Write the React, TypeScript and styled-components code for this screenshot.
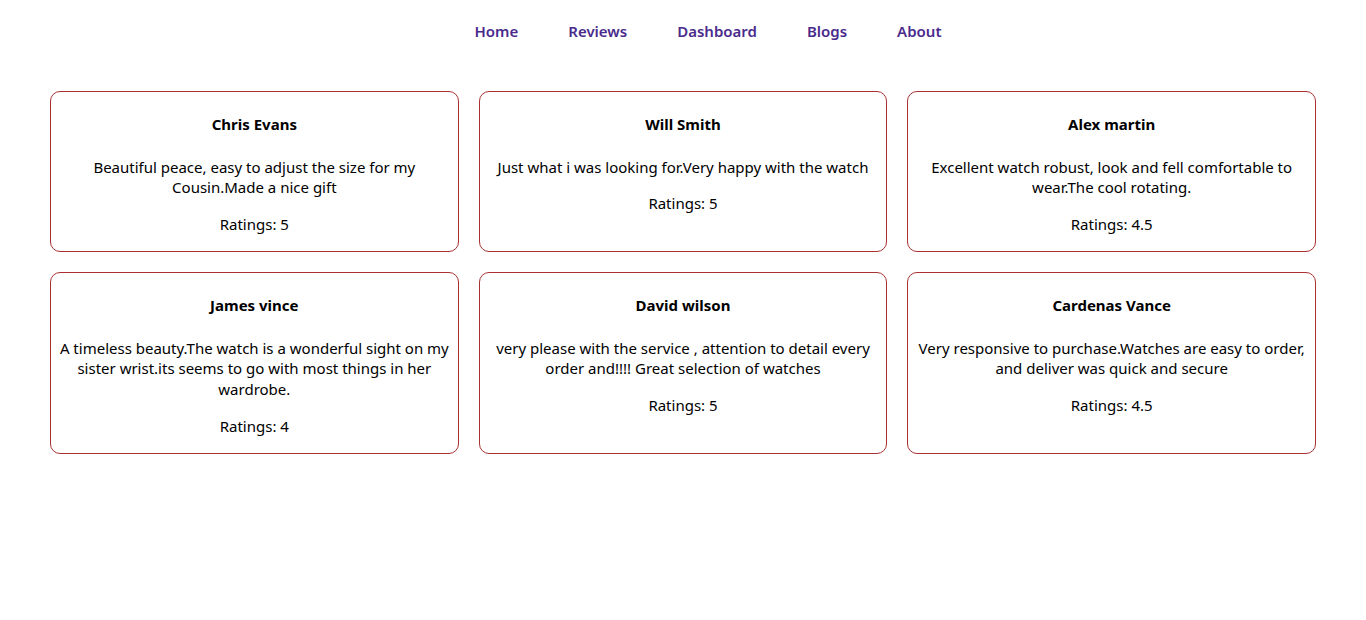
import React from "react";
import styled, { createGlobalStyle } from "styled-components";

const Global = createGlobalStyle`
  html, body { margin: 0; padding: 0; background: #fff; }
  body { font-family: "Noto Sans", "Open Sans", Arial, sans-serif; color: #000; }
`;

const Nav = styled.nav`
  display: flex;
  justify-content: center;
  padding-top: 21px;
  height: 20px;
`;

const NavLink = styled.a`
  margin-left: 50px;
  font-size: 15px;
  line-height: 21px;
  font-weight: 600;
  color: #4a2b8c;
  text-decoration: none;
`;

const Grid = styled.section`
  display: grid;
  grid-template-columns: repeat(3, 1fr);
  gap: 20px;
  margin: 50px 50px 0;
`;

const Card = styled.div`
  border: 1px solid #a83232;
  border-radius: 10px;
  padding: 0 8px;
  text-align: center;
  display: flex;
  flex-direction: column;
`;

const Name = styled.h4`
  margin: 22px 0 21.5px;
  font-size: 15px;
  line-height: 21px;
  font-weight: 700;
`;

const Text = styled.p<{ $last?: boolean }>`
  margin: 0 0 ${(p) => (p.$last ? "16.4px" : "16px")};
  font-size: 15px;
  line-height: 20.7px;
`;

const reviews = [
  { name: "Chris Evans", text: "Beautiful peace, easy to adjust the size for my Cousin.Made a nice gift", rating: "5" },
  { name: "Will Smith", text: "Just what i was looking for.Very happy with the watch", rating: "5" },
  { name: "Alex martin", text: "Excellent watch robust, look and fell comfortable to wear.The cool rotating.", rating: "4.5" },
  { name: "James vince", text: "A timeless beauty.The watch is a wonderful sight on my sister wrist.its seems to go with most things in her wardrobe.", rating: "4" },
  { name: "David wilson", text: "very please with the service , attention to detail every order and!!!! Great selection of watches", rating: "5" },
  { name: "Cardenas Vance", text: "Very responsive to purchase.Watches are easy to order, and deliver was quick and secure", rating: "4.5" },
];

export default function App() {
  return (
    <>
      <Global />
      <Nav>
        {["Home", "Reviews", "Dashboard", "Blogs", "About"].map((l) => (
          <NavLink key={l} href="#">{l}</NavLink>
        ))}
      </Nav>
      <Grid>
        {reviews.map((r) => (
          <Card key={r.name}>
            <Name>{r.name}</Name>
            <Text>{r.text}</Text>
            <Text $last>Ratings: {r.rating}</Text>
          </Card>
        ))}
      </Grid>
    </>
  );
}
